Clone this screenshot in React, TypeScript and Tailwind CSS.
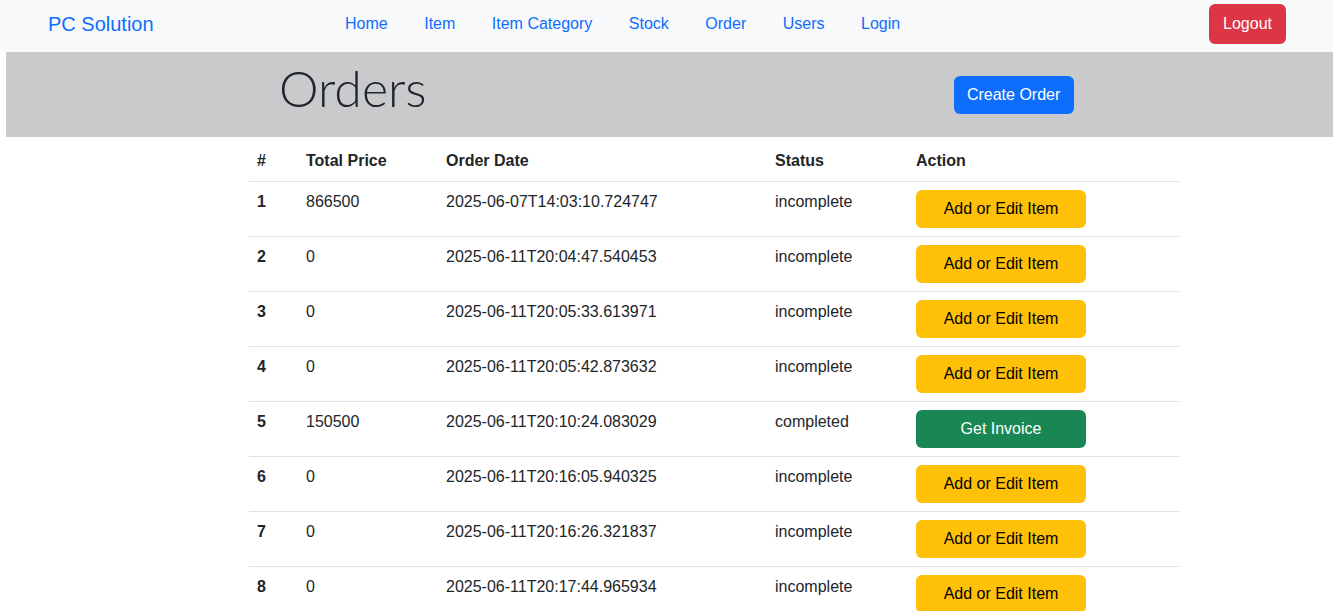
import React from 'react'

type Order = { id: number; total: string; date: string; status: string }

const orders: Order[] = [
  { id: 1, total: '866500', date: '2025-06-07T14:03:10.724747', status: 'incomplete' },
  { id: 2, total: '0', date: '2025-06-11T20:04:47.540453', status: 'incomplete' },
  { id: 3, total: '0', date: '2025-06-11T20:05:33.613971', status: 'incomplete' },
  { id: 4, total: '0', date: '2025-06-11T20:05:42.873632', status: 'incomplete' },
  { id: 5, total: '150500', date: '2025-06-11T20:10:24.083029', status: 'completed' },
  { id: 6, total: '0', date: '2025-06-11T20:16:05.940325', status: 'incomplete' },
  { id: 7, total: '0', date: '2025-06-11T20:16:26.321837', status: 'incomplete' },
  { id: 8, total: '0', date: '2025-06-11T20:17:44.965934', status: 'incomplete' },
]

const links = ['Home', 'Item', 'Item Category', 'Stock', 'Order', 'Users', 'Login']

const Navbar = () => (
  <nav className="flex items-center h-[52px] bg-[#f8f9fa]">
    <a className="ml-[48px] w-[297px] text-[20px] text-[#0d6efd] leading-[28px] -mt-[4px]">PC Solution</a>
    <ul className="flex gap-[36.5px] -mt-[4px]">
      {links.map((l) => (
        <li key={l} className="text-[16px] text-[#0d6efd] leading-[24px]">{l}</li>
      ))}
    </ul>
    <button className="ml-auto mr-[47px] -mt-[4px] w-[77px] h-[40px] rounded-md bg-[#dc3545] text-white text-[16px]">
      Logout
    </button>
  </nav>
)

const Header = () => (
  <div className="ml-[6px] h-[85px] bg-[#c9cacc] flex items-center">
    <h1 className="ml-[273px] -mt-[14px] text-[50px] font-light leading-[56px] text-[#212529] font-['Lato','Liberation_Sans',sans-serif]">
      Orders
    </h1>
    <button className="ml-[527px] w-[120px] h-[38px] rounded-md bg-[#0d6efd] text-white text-[16px]">
      Create Order
    </button>
  </div>
)

const OrdersTable = () => (
  <table className="ml-[249px] mt-[4px] w-[930px] border-collapse text-[16px] leading-[24px] text-[#212529]">
    <thead>
      <tr className="border-b border-[#dee2e6] text-left">
        <th className="w-[49px] p-2 font-bold">#</th>
        <th className="w-[140px] p-2 font-bold">Total Price</th>
        <th className="w-[329px] p-2 font-bold">Order Date</th>
        <th className="w-[141px] p-2 font-bold">Status</th>
        <th className="w-[271px] p-2 font-bold">Action</th>
      </tr>
    </thead>
    <tbody>
      {orders.map((o) => (
        <tr key={o.id} className="border-b border-[#dee2e6] align-top">
          <td className="p-2 font-bold">{o.id}</td>
          <td className="p-2">{o.total}</td>
          <td className="p-2">{o.date}</td>
          <td className="p-2">{o.status}</td>
          <td className="p-2">
            {o.status === 'completed' ? (
              <button className="w-[170px] h-[38px] rounded-md bg-[#198754] text-white">Get Invoice</button>
            ) : (
              <button className="w-[170px] h-[38px] rounded-md bg-[#ffc107] text-black">Add or Edit Item</button>
            )}
          </td>
        </tr>
      ))}
    </tbody>
  </table>
)

export default function App() {
  return (
    <div className="h-[611px] overflow-hidden bg-white font-['Liberation_Sans',Arial,sans-serif]">
      <Navbar />
      <Header />
      <OrdersTable />
    </div>
  )
}
